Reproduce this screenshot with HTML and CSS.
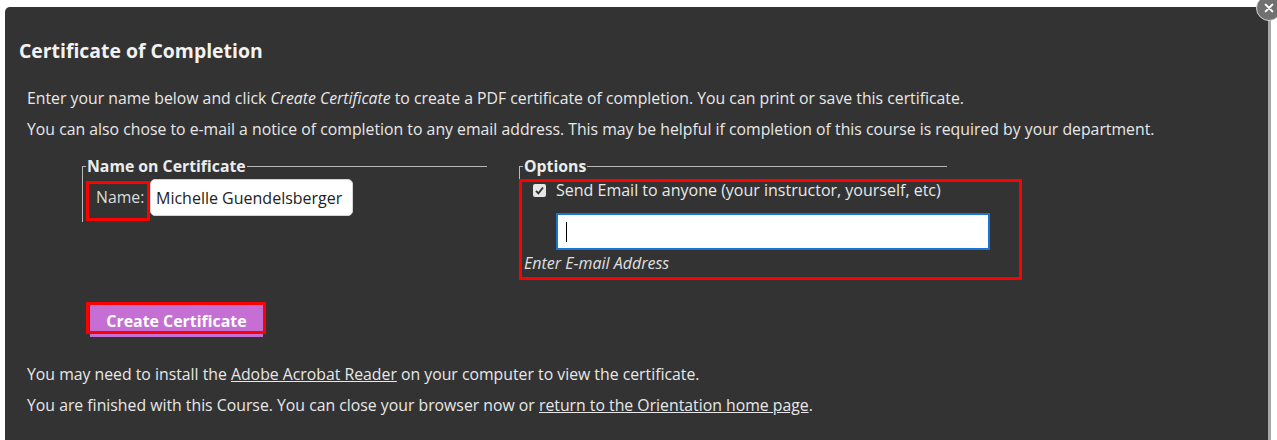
FILE: index.html
```html
<!DOCTYPE html>
<html lang="en">
<head>
<meta charset="utf-8">
<title>Certificate of Completion</title>
<link rel="stylesheet" href="styles.css">
</head>
<body>
<div class="page">
  <div class="dialog">
    <button class="close" aria-label="Close">
      <svg viewBox="0 0 24 24" width="24" height="24"><path d="M7 7 L17 17 M17 7 L7 17" stroke="#fff" stroke-width="3" stroke-linecap="round"/></svg>
    </button>
    <h2 class="title">Certificate of Completion</h2>
    <div class="intro">
      <p>Enter your name below and click <em>Create Certificate</em> to create a PDF certificate of completion. You can print or save this certificate.</p>
      <p>You can also chose to e-mail a notice of completion to any email address. This may be helpful if completion of this course is required by your department.</p>
    </div>
    <form class="cert-form">
      <div class="groups">
        <fieldset class="group group-name">
          <legend>Name on Certificate</legend>
          <div class="name-row">
            <label class="name-label mark-outline" for="nm">Name:</label>
            <input id="nm" class="name-input" type="text" value="Michelle Guendelsberger">
          </div>
        </fieldset>
        <fieldset class="group group-options">
          <legend>Options</legend>
          <div class="options-box">
            <label class="check-row"><span class="check"><svg viewBox="0 0 14 14" width="14" height="14"><path d="M3.2 7.4 L5.8 10 L10.8 3.8" fill="none" stroke="#333" stroke-width="2"/></svg></span>Send Email to anyone (your instructor, yourself, etc)</label>
            <div class="email-field"><span class="caret"></span></div>
            <div class="email-hint">Enter E-mail Address</div>
          </div>
        </fieldset>
      </div>
      <div class="actions">
        <span class="btn-wrap mark-outline"><button type="button" class="btn">Create Certificate</button></span>
      </div>
    </form>
    <div class="outro">
      <p>You may need to install the <a href="#">Adobe Acrobat Reader</a> on your computer to view the certificate.</p>
      <p>You are finished with this Course. You can close your browser now or <a href="#">return to the Orientation home page</a>.</p>
    </div>
  </div>
  <div class="rail"></div>
</div>
</body>
</html>
```

FILE: styles.css
```css
html, body {
  margin: 0;
  padding: 0;
  background: #ffffff;
  height: 440px;
  overflow: hidden;
}

.page {
  display: flex;
  height: 440px;
  padding: 7px 6px 0 5px;
  box-sizing: border-box;
}

.dialog {
  position: relative;
  flex: 1;
  background: #333333;
  border-top-left-radius: 5px;
  color: #e8e8e8;
  font-family: "Open Sans", "Liberation Sans", sans-serif;
  font-size: 15.8px;
  padding: 0 0 0 14px;
}

.rail {
  width: 3px;
  background: #a8a8a8;
}

/* round close control hanging off the top-right corner */
.close {
  position: absolute;
  top: -12px;
  right: -14px;
  width: 26px;
  height: 26px;
  border-radius: 50%;
  border: 1px solid #d8d8d8;
  background: #707070;
  padding: 0;
  display: flex;
  align-items: center;
  justify-content: center;
}
.close svg { width: 16px; height: 16px; }

.title {
  margin: 0;
  padding-top: 32px;
  font-size: 19.4px;
  font-weight: 700;
  line-height: 24px;
  color: #f2f2f2;
}

.intro {
  padding: 20px 0 0 8px;
}
.intro p, .outro p {
  margin: 0;
  line-height: 31px;
}
.intro em { font-style: italic; }

.cert-form {
  padding: 13px 0 0 63px;
}

.groups {
  display: flex;
  gap: 32px;
  align-items: flex-start;
}

.group {
  margin: 0;
  padding: 0 0 0 3px;
  border: 0;
  border-top: 1px solid #b8b8b8;
  border-left: 1px solid #b8b8b8;
  min-width: 0;
  box-sizing: border-box;
}
.group legend {
  padding: 0 1px;
  margin-left: 0;
  font-weight: 700;
  font-size: 15.8px;
  color: #ececec;
  line-height: 16px;
}
.group-name {
  width: 405px;
  height: 64px;
}
.group-options {
  width: 428px;
  height: 121px;
  padding: 0 0 0 3px;
}

.name-row {
  display: flex;
  align-items: flex-start;
  padding-top: 5px;
}
.mark-outline {
  outline: 3px solid #ff0000;
}
.name-label {
  display: block;
  width: 58px;
  height: 34px;
  margin: 5px 0 0 3px;
  padding: 3px 0 0 7px;
  box-sizing: border-box;
  color: #dcdcdc;
  line-height: 20px;
}
.name-input {
  margin-left: 3px;
  width: 203px;
  height: 37px;
  box-sizing: border-box;
  border: 1px solid #d4d4d4;
  border-radius: 5px;
  background: #ffffff;
  font-family: "Open Sans", "Liberation Sans", sans-serif;
  font-size: 16px;
  color: #222;
  padding: 0 5px;
}

.options-box {
  margin: 5px 0 0 -4px;
  width: 503px;
  height: 101px;
  box-sizing: border-box;
  border: 3px solid #ff0000;
  padding: 0 0 0 2px;
}
.check-row {
  display: flex;
  align-items: center;
  padding-left: 9px;
  line-height: 17px;
  color: #e8e8e8;
  font-size: 16px;
}
.check {
  width: 13px;
  height: 13px;
  background: #e6e6e6;
  border-radius: 2px;
  margin-right: 10px;
  display: flex;
}
.check svg { width: 13px; height: 13px; }

.email-field {
  margin: 14px 0 0 32px;
  width: 434px;
  height: 37px;
  box-sizing: border-box;
  border: 2px solid #1a73d6;
  background: #fff;
  display: flex;
  align-items: center;
  padding-left: 8px;
}
.caret {
  width: 1px;
  height: 20px;
  background: #000;
}
.email-hint {
  margin-top: 1px;
  font-style: italic;
  font-size: 16px;
  color: #e0e0e0;
  line-height: 24px;
}

.actions {
  display: flex;
  padding: 26px 0 0 7px;
}
.btn-wrap {
  display: block;
  width: 174px;
  height: 26px;
}
.btn {
  display: block;
  width: 173px;
  height: 32px;
  margin-left: 1px;
  border: 0;
  background: #c56fd4;
  color: #ffffff;
  font-family: "Open Sans", "Liberation Sans", sans-serif;
  font-weight: 700;
  font-size: 15.9px;
  padding: 0;
}

.outro {
  padding: 28px 0 0 8px;
}
.outro a {
  color: #e8e8e8;
  text-decoration: underline;
}
```
